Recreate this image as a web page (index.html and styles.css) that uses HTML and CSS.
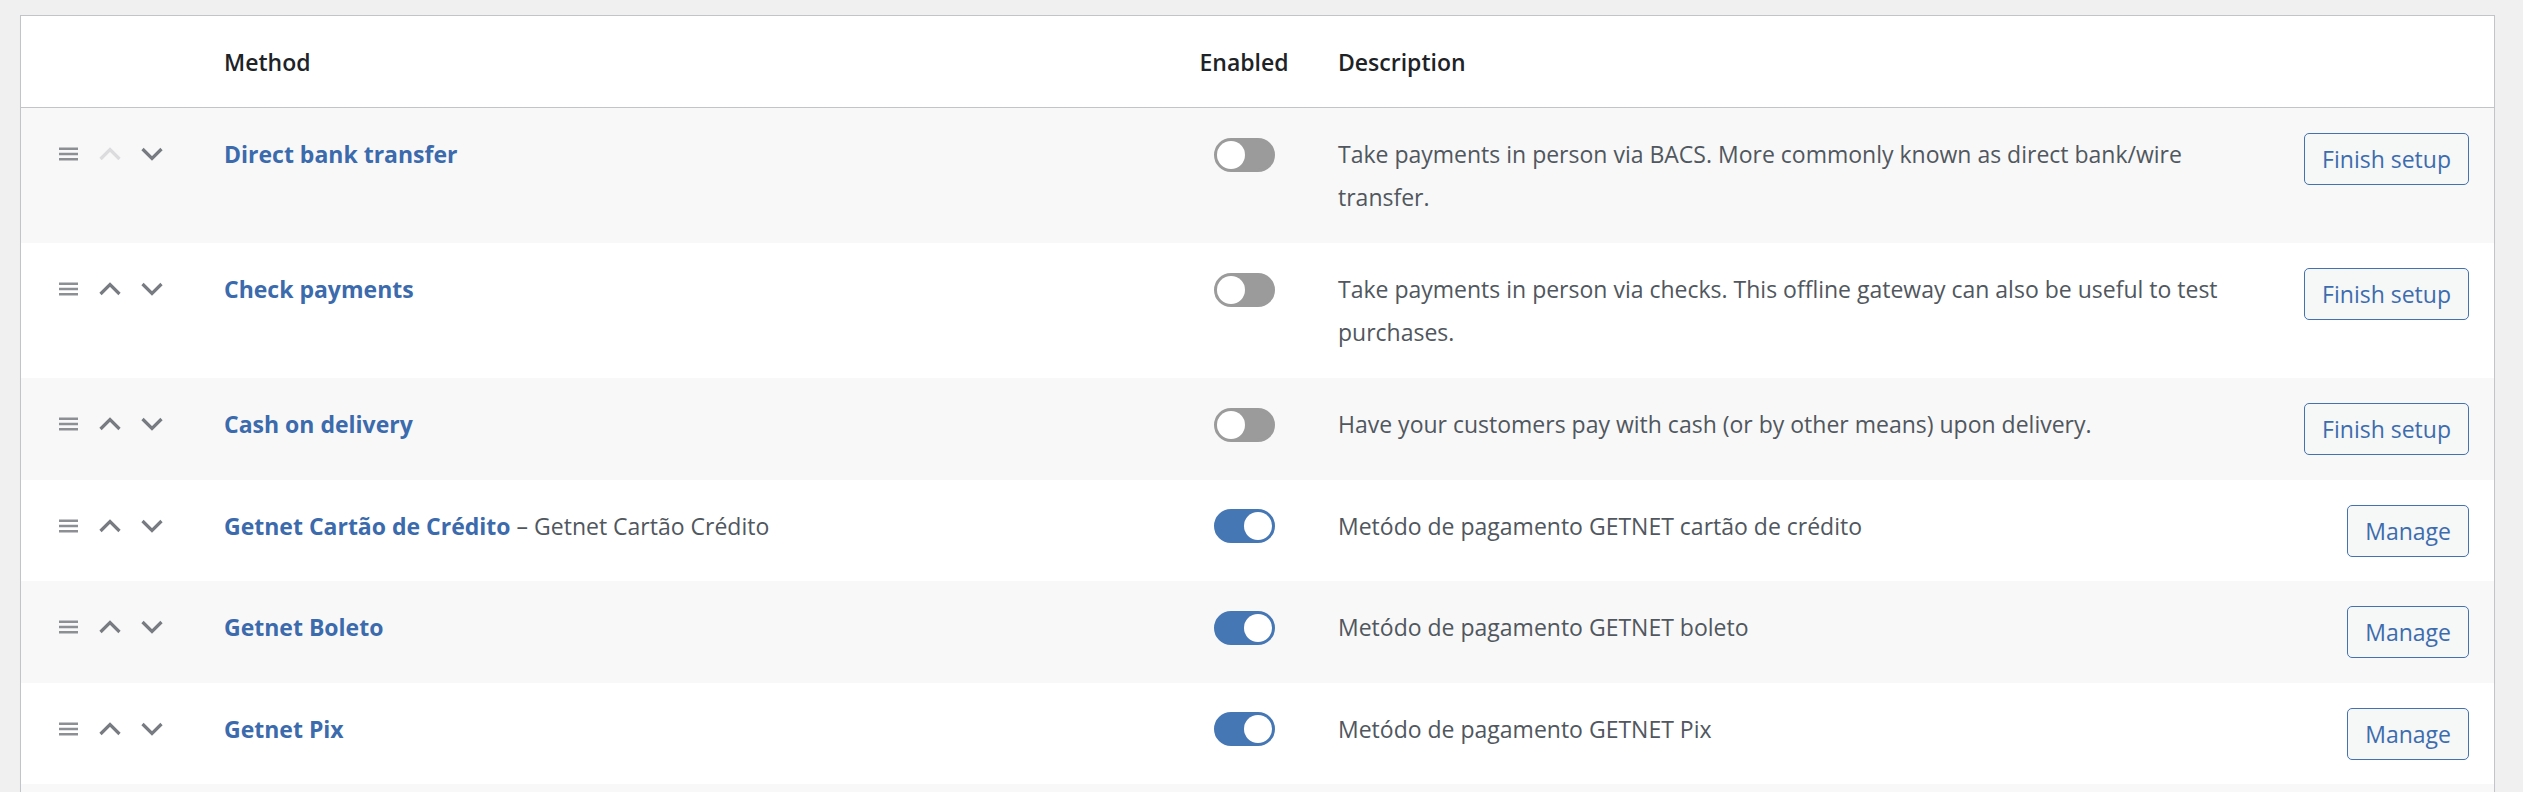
FILE: index.html
```html
<!DOCTYPE html>
<html lang="en">
<head>
    <meta charset="UTF-8">
    <meta name="viewport" content="width=device-width, initial-scale=1.0">
    <title>Payments ‹ WooCommerce settings</title>
    <link rel="stylesheet" href="styles.css">
</head>
<body>
    <div class="wrap">
        <table class="gateways">
            <thead>
                <tr>
                    <th class="sort"></th>
                    <th class="name">Method</th>
                    <th class="status">Enabled</th>
                    <th class="description">Description</th>
                    <th class="action"></th>
                </tr>
            </thead>
            <tbody>
                <tr>
                    <td class="sort">
                        <div class="sort-controls">
                            <svg class="handle" viewBox="0 0 19 14"><rect y="0.5" width="19" height="2.5"/><rect y="5.75" width="19" height="2.5"/><rect y="11" width="19" height="2.5"/></svg>
                            <svg class="move disabled" viewBox="0 0 24 14"><polyline points="2.5,12 12,2.5 21.5,12"/></svg>
                            <svg class="move" viewBox="0 0 24 14"><polyline points="2.5,2 12,11.5 21.5,2"/></svg>
                        </div>
                    </td>
                    <td class="name"><a href="#">Direct bank transfer</a></td>
                    <td class="status"><span class="toggle"></span></td>
                    <td class="description">Take payments in person via BACS. More commonly known as direct bank/wire transfer.</td>
                    <td class="action"><a class="button" href="#">Finish setup</a></td>
                </tr>
                <tr>
                    <td class="sort">
                        <div class="sort-controls">
                            <svg class="handle" viewBox="0 0 19 14"><rect y="0.5" width="19" height="2.5"/><rect y="5.75" width="19" height="2.5"/><rect y="11" width="19" height="2.5"/></svg>
                            <svg class="move" viewBox="0 0 24 14"><polyline points="2.5,12 12,2.5 21.5,12"/></svg>
                            <svg class="move" viewBox="0 0 24 14"><polyline points="2.5,2 12,11.5 21.5,2"/></svg>
                        </div>
                    </td>
                    <td class="name"><a href="#">Check payments</a></td>
                    <td class="status"><span class="toggle"></span></td>
                    <td class="description">Take payments in person via checks. This offline gateway can also be useful to test purchases.</td>
                    <td class="action"><a class="button" href="#">Finish setup</a></td>
                </tr>
                <tr>
                    <td class="sort">
                        <div class="sort-controls">
                            <svg class="handle" viewBox="0 0 19 14"><rect y="0.5" width="19" height="2.5"/><rect y="5.75" width="19" height="2.5"/><rect y="11" width="19" height="2.5"/></svg>
                            <svg class="move" viewBox="0 0 24 14"><polyline points="2.5,12 12,2.5 21.5,12"/></svg>
                            <svg class="move" viewBox="0 0 24 14"><polyline points="2.5,2 12,11.5 21.5,2"/></svg>
                        </div>
                    </td>
                    <td class="name"><a href="#">Cash on delivery</a></td>
                    <td class="status"><span class="toggle"></span></td>
                    <td class="description">Have your customers pay with cash (or by other means) upon delivery.</td>
                    <td class="action"><a class="button" href="#">Finish setup</a></td>
                </tr>
                <tr>
                    <td class="sort">
                        <div class="sort-controls">
                            <svg class="handle" viewBox="0 0 19 14"><rect y="0.5" width="19" height="2.5"/><rect y="5.75" width="19" height="2.5"/><rect y="11" width="19" height="2.5"/></svg>
                            <svg class="move" viewBox="0 0 24 14"><polyline points="2.5,12 12,2.5 21.5,12"/></svg>
                            <svg class="move" viewBox="0 0 24 14"><polyline points="2.5,2 12,11.5 21.5,2"/></svg>
                        </div>
                    </td>
                    <td class="name"><a href="#">Getnet Cartão de Crédito</a> – Getnet Cartão Crédito</td>
                    <td class="status"><span class="toggle on"></span></td>
                    <td class="description">Metódo de pagamento GETNET cartão de crédito</td>
                    <td class="action"><a class="button" href="#">Manage</a></td>
                </tr>
                <tr>
                    <td class="sort">
                        <div class="sort-controls">
                            <svg class="handle" viewBox="0 0 19 14"><rect y="0.5" width="19" height="2.5"/><rect y="5.75" width="19" height="2.5"/><rect y="11" width="19" height="2.5"/></svg>
                            <svg class="move" viewBox="0 0 24 14"><polyline points="2.5,12 12,2.5 21.5,12"/></svg>
                            <svg class="move" viewBox="0 0 24 14"><polyline points="2.5,2 12,11.5 21.5,2"/></svg>
                        </div>
                    </td>
                    <td class="name"><a href="#">Getnet Boleto</a></td>
                    <td class="status"><span class="toggle on"></span></td>
                    <td class="description">Metódo de pagamento GETNET boleto</td>
                    <td class="action"><a class="button" href="#">Manage</a></td>
                </tr>
                <tr>
                    <td class="sort">
                        <div class="sort-controls">
                            <svg class="handle" viewBox="0 0 19 14"><rect y="0.5" width="19" height="2.5"/><rect y="5.75" width="19" height="2.5"/><rect y="11" width="19" height="2.5"/></svg>
                            <svg class="move" viewBox="0 0 24 14"><polyline points="2.5,12 12,2.5 21.5,12"/></svg>
                            <svg class="move" viewBox="0 0 24 14"><polyline points="2.5,2 12,11.5 21.5,2"/></svg>
                        </div>
                    </td>
                    <td class="name"><a href="#">Getnet Pix</a></td>
                    <td class="status"><span class="toggle on"></span></td>
                    <td class="description">Metódo de pagamento GETNET Pix</td>
                    <td class="action"><a class="button" href="#">Manage</a></td>
                </tr>
                <tr>
                    <td class="sort">
                        <div class="sort-controls">
                            <svg class="handle" viewBox="0 0 19 14"><rect y="0.5" width="19" height="2.5"/><rect y="5.75" width="19" height="2.5"/><rect y="11" width="19" height="2.5"/></svg>
                            <svg class="move" viewBox="0 0 24 14"><polyline points="2.5,12 12,2.5 21.5,12"/></svg>
                            <svg class="move disabled" viewBox="0 0 24 14"><polyline points="2.5,2 12,11.5 21.5,2"/></svg>
                        </div>
                    </td>
                    <td class="name"><a href="#">Getnet Débito</a></td>
                    <td class="status"><span class="toggle on"></span></td>
                    <td class="description">Metódo de pagamento GETNET débito</td>
                    <td class="action"><a class="button" href="#">Manage</a></td>
                </tr>
            </tbody>
        </table>
    </div>
</body>
</html>
```

FILE: styles.css
```css
body {
    margin: 0;
    background: #f0f0f1;
    color: #50575e;
    font-family: "Open Sans", -apple-system, BlinkMacSystemFont, "Segoe UI", Roboto, sans-serif;
    font-size: 23px;
    line-height: 42.5px;
}
.wrap {
    margin: 15px 28px 0 20px;
}
.gateways {
    width: 100%;
    table-layout: fixed;
    border-spacing: 0;
    background: #fff;
    border: 1px solid #c3c4c7;
    box-shadow: 0 1px 1px rgba(0,0,0,0.04);
}
.gateways th,
.gateways td {
    box-sizing: border-box;
    padding: 25px 17px;
    vertical-align: top;
    text-align: left;
}
.gateways thead th {
    padding-top: 24.5px;
    padding-bottom: 24px;
    border-bottom: 1px solid #c3c4c7;
    color: #1d2327;
    font-weight: 600;
}
.gateways tbody tr:nth-child(odd) td {
    background: #f8f8f8;
}
.gateways .sort {
    width: 186px;
    padding-left: 38px;
}
.gateways .name {
    width: 961px;
}
.gateways .status {
    width: 152px;
    text-align: center;
}
.gateways .description {
    width: 960px;
    padding-left: 18px;
}
.gateways .action {
    text-align: right;
    padding-right: 25px;
}
.gateways td.action {
    padding-bottom: 24.5px;
}
.name a {
    color: #3b6aad;
    font-weight: 700;
    text-decoration: none;
}

/* sort handle + up/down arrows */
.sort-controls {
    display: flex;
    align-items: center;
    height: 42.5px;
}
.handle {
    width: 19px;
    height: 14px;
    margin-right: 20px;
    fill: #8c8f94;
}
.move {
    width: 24px;
    height: 14px;
    fill: none;
    stroke: #787c82;
    stroke-width: 3.2;
}
.move + .move {
    margin-left: 18px;
}
.move.disabled {
    stroke: #dcdcde;
}

/* enabled toggle */
.toggle {
    display: block;
    box-sizing: border-box;
    width: 61px;
    height: 34px;
    margin: 4.5px auto 0;
    border: 3px solid #9b9b9b;
    border-radius: 17px;
    background: #9b9b9b;
    position: relative;
}
.toggle::before {
    content: "";
    position: absolute;
    top: 0;
    left: 0;
    width: 28px;
    height: 28px;
    border-radius: 50%;
    background: #fff;
}
.toggle.on {
    background: #4677b5;
    border-color: #4677b5;
}
.toggle.on::before {
    left: auto;
    right: 0;
}

.button {
    display: inline-block;
    vertical-align: top;
    box-sizing: border-box;
    height: 52px;
    padding: 0 17px;
    line-height: 50px;
    border: 1px solid #4472b0;
    border-radius: 5px;
    background: #f6f7f7;
    color: #3d6cae;
    text-decoration: none;
    white-space: nowrap;
}
```
